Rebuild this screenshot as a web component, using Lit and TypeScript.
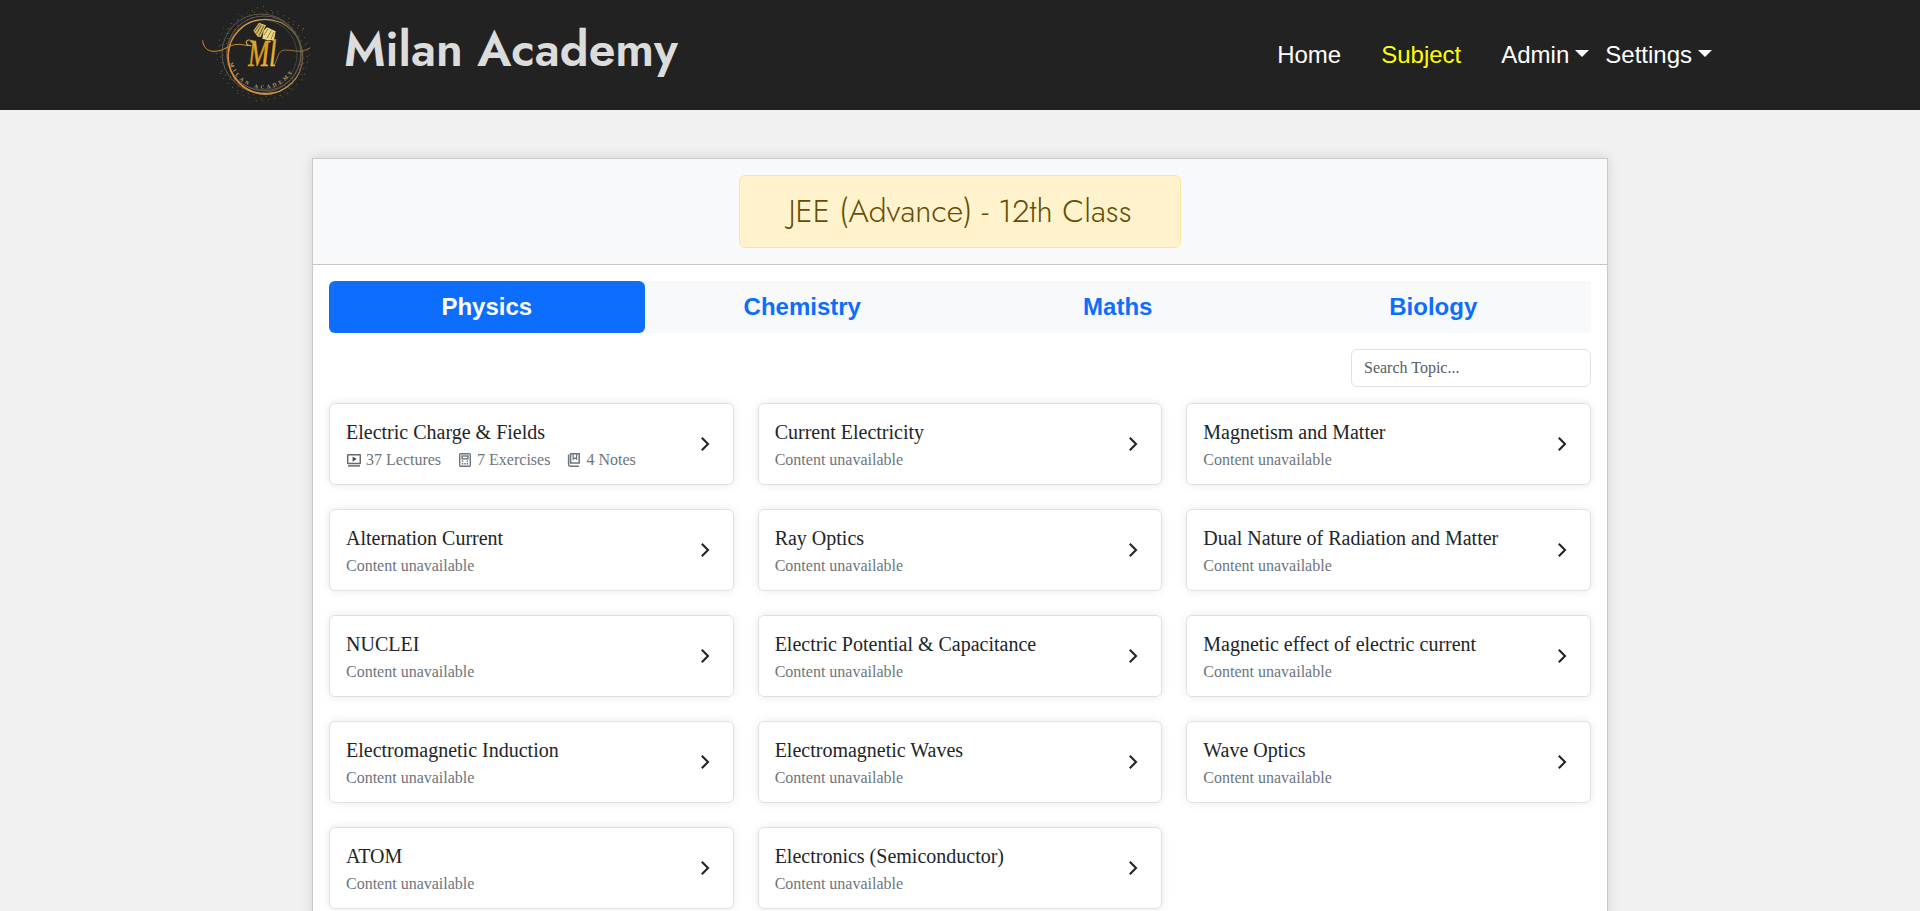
import { LitElement, html, css, svg } from "lit";
import { customElement, property } from "lit/decorators.js";
import { classMap } from "lit/directives/class-map.js";

interface Topic {
  title: string;
  lectures?: number;
  exercises?: number;
  notes?: number;
}

const TOPICS: Topic[] = [
  { title: "Electric Charge & Fields", lectures: 37, exercises: 7, notes: 4 },
  { title: "Current Electricity" },
  { title: "Magnetism and Matter" },
  { title: "Alternation Current" },
  { title: "Ray Optics" },
  { title: "Dual Nature of Radiation and Matter" },
  { title: "NUCLEI" },
  { title: "Electric Potential & Capacitance" },
  { title: "Magnetic effect of electric current" },
  { title: "Electromagnetic Induction" },
  { title: "Electromagnetic Waves" },
  { title: "Wave Optics" },
  { title: "ATOM" },
  { title: "Electronics (Semiconductor)" },
];

const SUBJECTS = ["Physics", "Chemistry", "Maths", "Biology"];

// Gold dust scattered around the ring, spread with a fixed pseudo-random walk.
const DUST = Array.from({ length: 150 }, (_, i) => {
  const a = i * 2.39996;
  const r = 112 + ((i * 37) % 31);
  return {
    x: 220 + Math.cos(a) * r,
    y: 162 + Math.sin(a) * r,
    s: 1.1 + ((i * 13) % 10) / 10,
    o: 0.35 + ((i * 7) % 10) / 18,
  };
});

@customElement("academy-logo")
export class AcademyLogo extends LitElement {
  static styles = css`
    :host { display: block; width: 140px; height: 110px; }
    svg { display: block; }
    .word { font: 700 16px "Liberation Serif", serif; letter-spacing: 8.2px; fill: #b9a06a; }
    .mono { font: italic 400 92px "Liberation Serif", serif; fill: url(#gold); stroke: url(#gold); stroke-width: 1.5; }
  `;
  render() {
    return html`<svg width="140" height="110" viewBox="0 0 420 330">
      <defs>
        <linearGradient id="ring" x1="0" y1="0.6" x2="1" y2="0.3">
          <stop offset="0" stop-color="#c87a28" />
          <stop offset="0.35" stop-color="#e6b04c" />
          <stop offset="0.7" stop-color="#b98f48" />
          <stop offset="1" stop-color="#5c5040" />
        </linearGradient>
        <linearGradient id="gold" x1="0" y1="0" x2="1" y2="1">
          <stop offset="0" stop-color="#f0bd3c" />
          <stop offset="0.5" stop-color="#e09a1e" />
          <stop offset="1" stop-color="#f4cf55" />
        </linearGradient>
        <path id="arc" d="M119 188 A103 103 0 0 0 319 188" />
      </defs>
      ${DUST.map((d) => svg`<circle cx=${d.x} cy=${d.y} r=${d.s} fill="#c99a52" opacity=${d.o} />`)}
      <circle cx="214" cy="160" r="118" fill="none" stroke="#77705f" stroke-width="2" />
      <circle cx="222" cy="160" r="112" fill="none" stroke="#5f5b52" stroke-width="3" />
      <circle cx="216" cy="164" r="105" fill="none" stroke="#6e6655" stroke-width="1.5" />
      <circle cx="226" cy="170" r="112" fill="none" stroke="url(#ring)" stroke-width="4" />
      <path d="M122 130 A112 112 0 0 0 250 279" fill="none" stroke="#d98c33" stroke-width="4" />
      <path d="M38 121 C40 142 52 154 72 154 C104 154 112 134 144 133 C158 132 164 138 176 136" fill="none" stroke="#c98f30" stroke-width="3" />
      <path d="M252 196 C264 178 262 150 286 150 C310 150 330 158 344 151 C352 148 356 146 361 143" fill="none" stroke="#a88347" stroke-width="2.5" />
      <text class="mono" transform="translate(175 198) scale(.82 1.24)">Ml</text>
      <path d="M184 137 C166 138 164 119 178 120 C188 121 192 124 196 128" fill="none" stroke="#dda02f" stroke-width="3.5" />
      <path d="M190 92 L207 68 L228 76 L212 111 L203 110 Z" fill="#d9bd62" />
      <path d="M194 94 L209 73 M200 101 L214 75 M207 107 L221 78" stroke="#4b3b1c" stroke-width="2.5" />
      <path d="M221 92 L231 82 L257 94 L252 119 L234 121 L217 116 Z" fill="#efd986" />
      <path d="M222 105 L234 87 M231 115 L244 92 M243 117 L252 96" stroke="#614d24" stroke-width="2" />
      <text class="word"><textPath href="#arc" startOffset="2">MILAN ACADEMY</textPath></text>
    </svg>`;
  }
}

@customElement("site-header")
export class SiteHeader extends LitElement {
  static styles = css`
    :host {
      display: flex; box-sizing: border-box; height: 110px; padding: 0 208px 0 190px;
      background: #222; color: #fff; font: 24px/36px "Liberation Sans", Arial, sans-serif;
      align-items: center; justify-content: space-between;
    }
    .brand { display: flex; align-items: center; }
    .name {
      margin: 0 0 10px 14px; font: 600 48px/64px Jost, Lato, sans-serif; color: #dcdcdc;
      white-space: nowrap;
    }
    .nav { display: flex; align-items: center; }
    .link { margin-right: 40px; }
    .link.active { color: #ff0; }
    .menu { display: flex; align-items: center; gap: 6px; margin-right: 16px; }
    .menu:last-child { margin-right: 0; }
    .caret { border: 7px solid transparent; border-top-color: #fff; border-bottom: 0; margin-bottom: 3px; }
  `;
  render() {
    return html`
      <div class="brand"><academy-logo></academy-logo><span class="name">Milan Academy</span></div>
      <nav class="nav">
        <span class="link">Home</span>
        <span class="link active">Subject</span>
        <span class="menu">Admin<i class="caret"></i></span>
        <span class="menu">Settings<i class="caret"></i></span>
      </nav>`;
  }
}

const lectureIcon = svg`<svg width="16" height="16" viewBox="0 0 16 16" fill="none" stroke="#62696f" stroke-width="1.5">
  <rect x="1.7" y="2.7" width="12.6" height="8.8" rx=".5" /><path d="M2 13.9H14" />
  <path d="M6.6 4.5V9.8L10.6 7.1Z" fill="#3f464c" stroke="none" /></svg>`;
const exerciseIcon = svg`<svg width="16" height="16" viewBox="0 0 16 16" fill="none" stroke="#6c757d" stroke-width="1.4">
  <rect x="2.7" y="1.7" width="10.6" height="12.6" rx="1" /><rect x="5" y="4" width="6" height="2.8" />
  <path d="M4.9 9.3h1.4M9.7 9.3h1.4M4.9 11.8h1.4M7.3 11.8h1.4M9.7 11.8h1.4" /></svg>`;
const noteIcon = svg`<svg width="16" height="16" viewBox="0 0 16 16" fill="none" stroke="#6c757d" stroke-width="1.5">
  <rect x="4.6" y="1.8" width="8.6" height="9.2" /><path d="M2.6 2.6V12.6Q2.6 14.2 4 14.2H13" />
  <path d="M7.2 2V7.2L8.9 5.8L10.6 7.2V2" stroke-width="1.2" /></svg>`;

@customElement("topic-card")
export class TopicCard extends LitElement {
  @property({ attribute: false }) topic!: Topic;
  static styles = css`
    :host {
      display: flex; box-sizing: border-box; height: 82px; padding: 16px 23px 0 16px;
      border: 1px solid #dee2e6; border-radius: 6px; background: #fff;
      box-shadow: 0 0 10px rgba(0, 0, 0, 0.09); justify-content: space-between;
      font-family: "Liberation Serif", "Times New Roman", serif;
    }
    .title { font-size: 20px; line-height: 24px; color: #212529; }
    .meta { display: flex; margin-top: 4px; font-size: 16px; line-height: 24px; color: #6c757d; }
    .stat { display: flex; align-items: center; margin-right: 16px; }
    .stat svg { margin-right: 4px; }
    .chevron { display: block; margin-top: 15.5px; }
  `;
  render() {
    const t = this.topic;
    return html`
      <div>
        <div class="title">${t.title}</div>
        <div class="meta">
          ${t.lectures
            ? html`<span class="stat">${lectureIcon}${t.lectures} Lectures</span>
                <span class="stat">${exerciseIcon}${t.exercises} Exercises</span>
                <span class="stat">${noteIcon}${t.notes} Notes</span>`
            : "Content unavailable"}
        </div>
      </div>
      <svg class="chevron" width="10" height="16" viewBox="0 0 10 16" fill="none" stroke="#212529" stroke-width="2.1">
        <path d="M1.8 1.8L8 8L1.8 14.2" />
      </svg>`;
  }
}

@customElement("app-root")
export class AppRoot extends LitElement {
  static styles = css`
    :host {
      display: block; height: 911px; overflow: hidden; background: #f1f1f1;
      font-family: "Liberation Serif", "Times New Roman", serif;
    }
    .panel {
      box-sizing: border-box; width: 1296px; height: 900px; margin: 48px auto 0;
      border: 1px solid #c9cacc; background: #fff; box-shadow: 0 0 12px rgba(0, 0, 0, 0.13);
    }
    .head {
      display: flex; box-sizing: border-box; height: 106px; justify-content: center; align-items: center;
      background: #f8f9fa; border-bottom: 1px solid #c4c6c8;
    }
    .course {
      box-sizing: border-box; width: 442px; height: 73px; margin: 0; padding-top: 15px; text-align: center;
      border: 1px solid #ffe69c; border-radius: 6px; background: #fff3cd; color: #664d03;
      font: 300 32px/40px Jost, Lato, sans-serif; white-space: nowrap;
    }
    .body { display: flex; flex-direction: column; gap: 16px; padding: 16px; }
    .tabs {
      display: grid; grid-template-columns: repeat(4, 1fr); background: #f8f9fa; text-align: center;
      font: 700 24px/36px "Liberation Sans", Arial, sans-serif; color: #0d6efd;
    }
    .tab { padding: 8px 0; border-radius: 6px; }
    .tab.active { background: #0d6efd; color: #fff; }
    .search {
      align-self: flex-end; box-sizing: border-box; width: 240px; height: 38px; padding: 6px 12px;
      border: 1px solid #dee2e6; border-radius: 6px; background: #fff; font: 16px/24px "Liberation Serif", serif;
    }
    .search::placeholder { color: #595c5f; opacity: 1; }
    .grid { display: grid; grid-template-columns: repeat(3, 1fr); gap: 24px; }
  `;
  render() {
    return html`
      <site-header></site-header>
      <main class="panel">
        <div class="head"><h1 class="course">JEE (Advance) - 12th Class</h1></div>
        <div class="body">
          <div class="tabs">
            ${SUBJECTS.map((s, i) => html`<div class=${classMap({ tab: true, active: i === 0 })}>${s}</div>`)}
          </div>
          <input class="search" placeholder="Search Topic..." />
          <div class="grid">${TOPICS.map((t) => html`<topic-card .topic=${t}></topic-card>`)}</div>
        </div>
      </main>`;
  }
}
